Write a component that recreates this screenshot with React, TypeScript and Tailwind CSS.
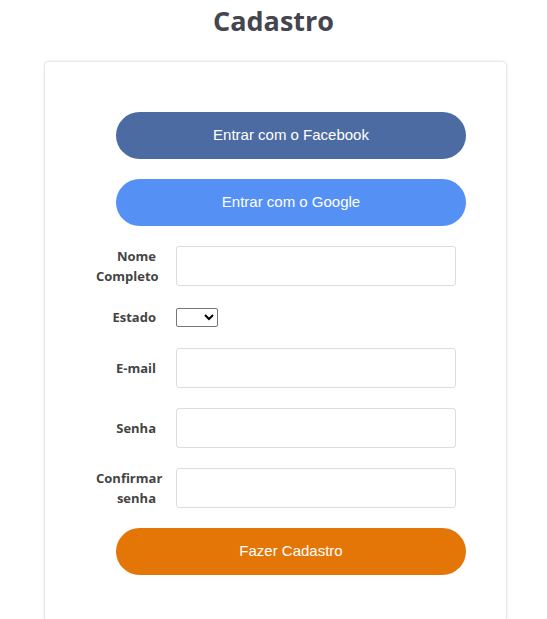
const labelFont = { fontFamily: '"Open Sans", "Noto Sans", sans-serif' }

function Field({ label, children }: { label: string; children: React.ReactNode }) {
  return (
    <div className="flex items-center gap-5">
      <label
        style={labelFont}
        className="w-[60px] shrink-0 text-right text-[13px] leading-[20px] font-bold text-[#444]"
      >
        {label}
      </label>
      {children}
    </div>
  )
}

function TextInput({ type = 'text' }: { type?: string }) {
  return (
    <input
      type={type}
      className="h-10 w-[280px] rounded-[3px] border border-[#dcdcdc] bg-white px-2 outline-none"
    />
  )
}

export default function App() {
  return (
    <div className="h-screen overflow-hidden bg-white pt-[4px]">
      <h1
        style={labelFont}
        className="text-center text-[27px] leading-[34px] font-bold text-[#45454f]"
      >
        Cadastro
      </h1>
      <div className="ml-[45px] mt-[24px] h-[600px] w-[461px] rounded-[4px] bg-white pt-[50px] shadow-[0_0_3px_rgba(0,0,0,0.25)]">
        <div className="flex flex-col gap-5">
          <button className="ml-[71px] h-[47px] w-[350px] rounded-full bg-[#4d6ba3] font-['Liberation_Sans',Arial,sans-serif] text-[15px] text-white">
            Entrar com o Facebook
          </button>
          <button className="ml-[71px] h-[47px] w-[350px] rounded-full bg-[#5591f5] font-['Liberation_Sans',Arial,sans-serif] text-[15px] text-white">
            Entrar com o Google
          </button>
          <div className="ml-[51px] flex flex-col gap-5">
            <Field label="Nome Completo">
              <TextInput />
            </Field>
            <div className="h-[22px]">
              <Field label="Estado">
                <select className="mt-[2px] h-[19px] w-[42px] rounded-[2px] border border-[#767676] bg-white text-[12px]">
                  <option></option>
                </select>
              </Field>
            </div>
            <Field label="E-mail">
              <TextInput type="email" />
            </Field>
            <Field label="Senha">
              <TextInput type="password" />
            </Field>
            <Field label="Confirmar senha">
              <TextInput type="password" />
            </Field>
          </div>
          <button className="ml-[71px] h-[47px] w-[350px] rounded-full bg-[#e47607] font-['Liberation_Sans',Arial,sans-serif] text-[15px] text-white">
            Fazer Cadastro
          </button>
        </div>
      </div>
    </div>
  )
}
